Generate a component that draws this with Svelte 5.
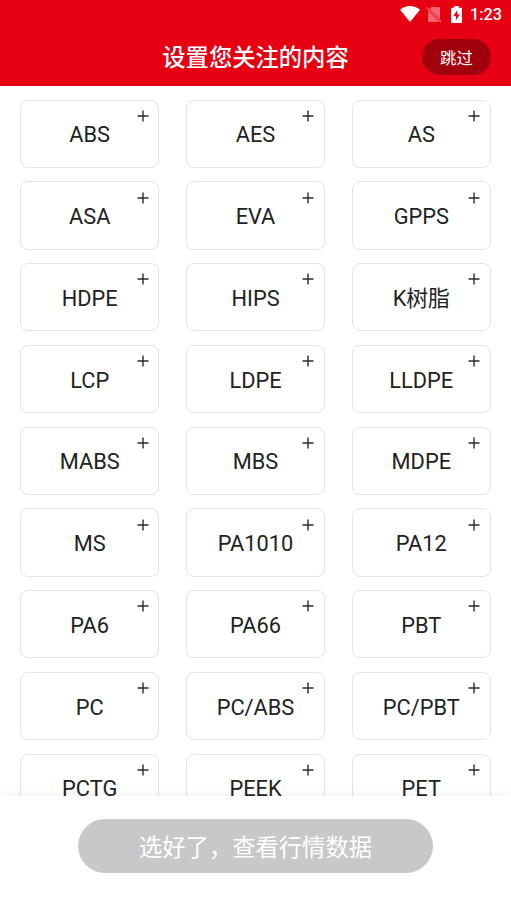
<script lang="ts">
  const materials = [
    'ABS', 'AES', 'AS',
    'ASA', 'EVA', 'GPPS',
    'HDPE', 'HIPS', 'K树脂',
    'LCP', 'LDPE', 'LLDPE',
    'MABS', 'MBS', 'MDPE',
    'MS', 'PA1010', 'PA12',
    'PA6', 'PA66', 'PBT',
    'PC', 'PC/ABS', 'PC/PBT',
    'PCTG', 'PEEK', 'PET'
  ];

  let selected: string[] = $state([]);

  function toggle(name: string) {
    if (selected.includes(name)) {
      selected = selected.filter((item) => item !== name);
    } else {
      selected = [...selected, name];
    }
  }
</script>

<div class="screen">
  <header>
    <div class="status-bar">
      <svg class="wifi" viewBox="0 0 20 16" aria-hidden="true">
        <path d="M0 3.7C6-1.2 14-1.2 20 3.7L10 16z" fill="#fff" />
      </svg>
      <svg class="sim" viewBox="0 0 16 17" aria-hidden="true">
        <path d="M5.4 1H13q1 0 1 1v11.3L3.5 3zM2 4.6 13.3 16H3q-1 0-1-1z" fill="#f4656d" />
        <path d="M.7 1.7 15 16" stroke="#f4656d" stroke-width="1.2" />
      </svg>
      <svg class="battery" viewBox="0 0 11 17" aria-hidden="true">
        <path d="M3.3 0h4.4v1.7H10q1 0 1 1V16q0 1-1 1H1q-1 0-1-1V2.7q0-1 1-1h2.3z" fill="#fff" />
        <path d="M6.3 4 2.3 10h2.6v4.3L8.9 8.4H6.3z" fill="#e60012" />
      </svg>
      <span class="time">1:23</span>
    </div>
    <div class="title-bar">
      <h1>设置您关注的内容</h1>
      <button class="skip">跳过</button>
    </div>
  </header>

  <main>
    {#each materials as name}
      <button class="card" class:active={selected.includes(name)} onclick={() => toggle(name)}>
        <span>{name}</span>
        <svg class="plus" viewBox="0 0 12 12" aria-hidden="true">
          <path d="M6 .5v11M.5 6h11" stroke="#2b2b2b" stroke-width="1.4" />
        </svg>
      </button>
    {/each}
  </main>

  <footer>
    <button class="confirm">选好了，查看行情数据</button>
  </footer>
</div>

<style>
  :global(body) {
    margin: 0;
    background: #fff;
  }

  .screen {
    display: flex;
    flex-direction: column;
    height: 908px;
    overflow: hidden;
    font-family: Roboto, 'Noto Sans CJK SC', sans-serif;
    color: #222;
  }

  button {
    margin: 0;
    padding: 0;
    border: none;
    font-family: inherit;
    cursor: pointer;
  }

  header {
    flex: none;
    height: 86px;
    background: #e60012;
    color: #fff;
  }

  .status-bar {
    display: flex;
    align-items: center;
    justify-content: flex-end;
    height: 28px;
    padding-right: 9px;
    box-sizing: border-box;
  }

  .wifi {
    width: 20px;
    height: 16px;
    margin-right: 6px;
  }

  .sim {
    width: 16px;
    height: 17px;
    margin-right: 9px;
  }

  .battery {
    width: 11px;
    height: 17px;
    margin-right: 8px;
  }

  .time {
    padding-top: 2px;
    font-size: 16.3px;
    font-weight: 500;
    line-height: 26px;
  }

  .title-bar {
    display: grid;
    grid-template-columns: 1fr auto 1fr;
    align-items: center;
    height: 58px;
    padding: 0 20px;
  }

  h1 {
    grid-column: 2;
    margin: 0;
    padding-top: 2px;
    font-size: 23.3px;
    font-weight: 500;
    line-height: 34px;
  }

  .skip {
    justify-self: end;
    width: 69px;
    height: 36px;
    padding-bottom: 1px;
    border-radius: 18px;
    background: #a1000d;
    color: #fff;
    font-size: 16.4px;
  }

  main {
    flex: 1;
    min-height: 0;
    overflow: hidden;
    display: grid;
    grid-template-columns: repeat(3, 1fr);
    grid-auto-rows: 68.25px;
    align-content: start;
    gap: 13.5px 27px;
    padding: 13.7px 20.3px 0;
  }

  .card {
    position: relative;
    padding-top: 3px;
    border: 1px solid #e4e4e4;
    border-radius: 8px;
    background: #fff;
    color: #222;
    font-size: 21.8px;
    line-height: 32px;
  }

  .card.active {
    border-color: #e60012;
    color: #e60012;
  }

  .plus {
    position: absolute;
    top: 9.3px;
    right: 9.6px;
    width: 12px;
    height: 12px;
  }

  footer {
    position: relative;
    flex: none;
    display: flex;
    justify-content: center;
    align-items: flex-start;
    height: 112px;
    padding-top: 23px;
    box-sizing: border-box;
    background: #fff;
    box-shadow: 0 0 8px rgba(0, 0, 0, 0.07);
  }

  .confirm {
    width: 355px;
    height: 54px;
    border-radius: 27px;
    background: #c8c8c8;
    color: #fff;
    font-size: 23.3px;
  }
</style>
